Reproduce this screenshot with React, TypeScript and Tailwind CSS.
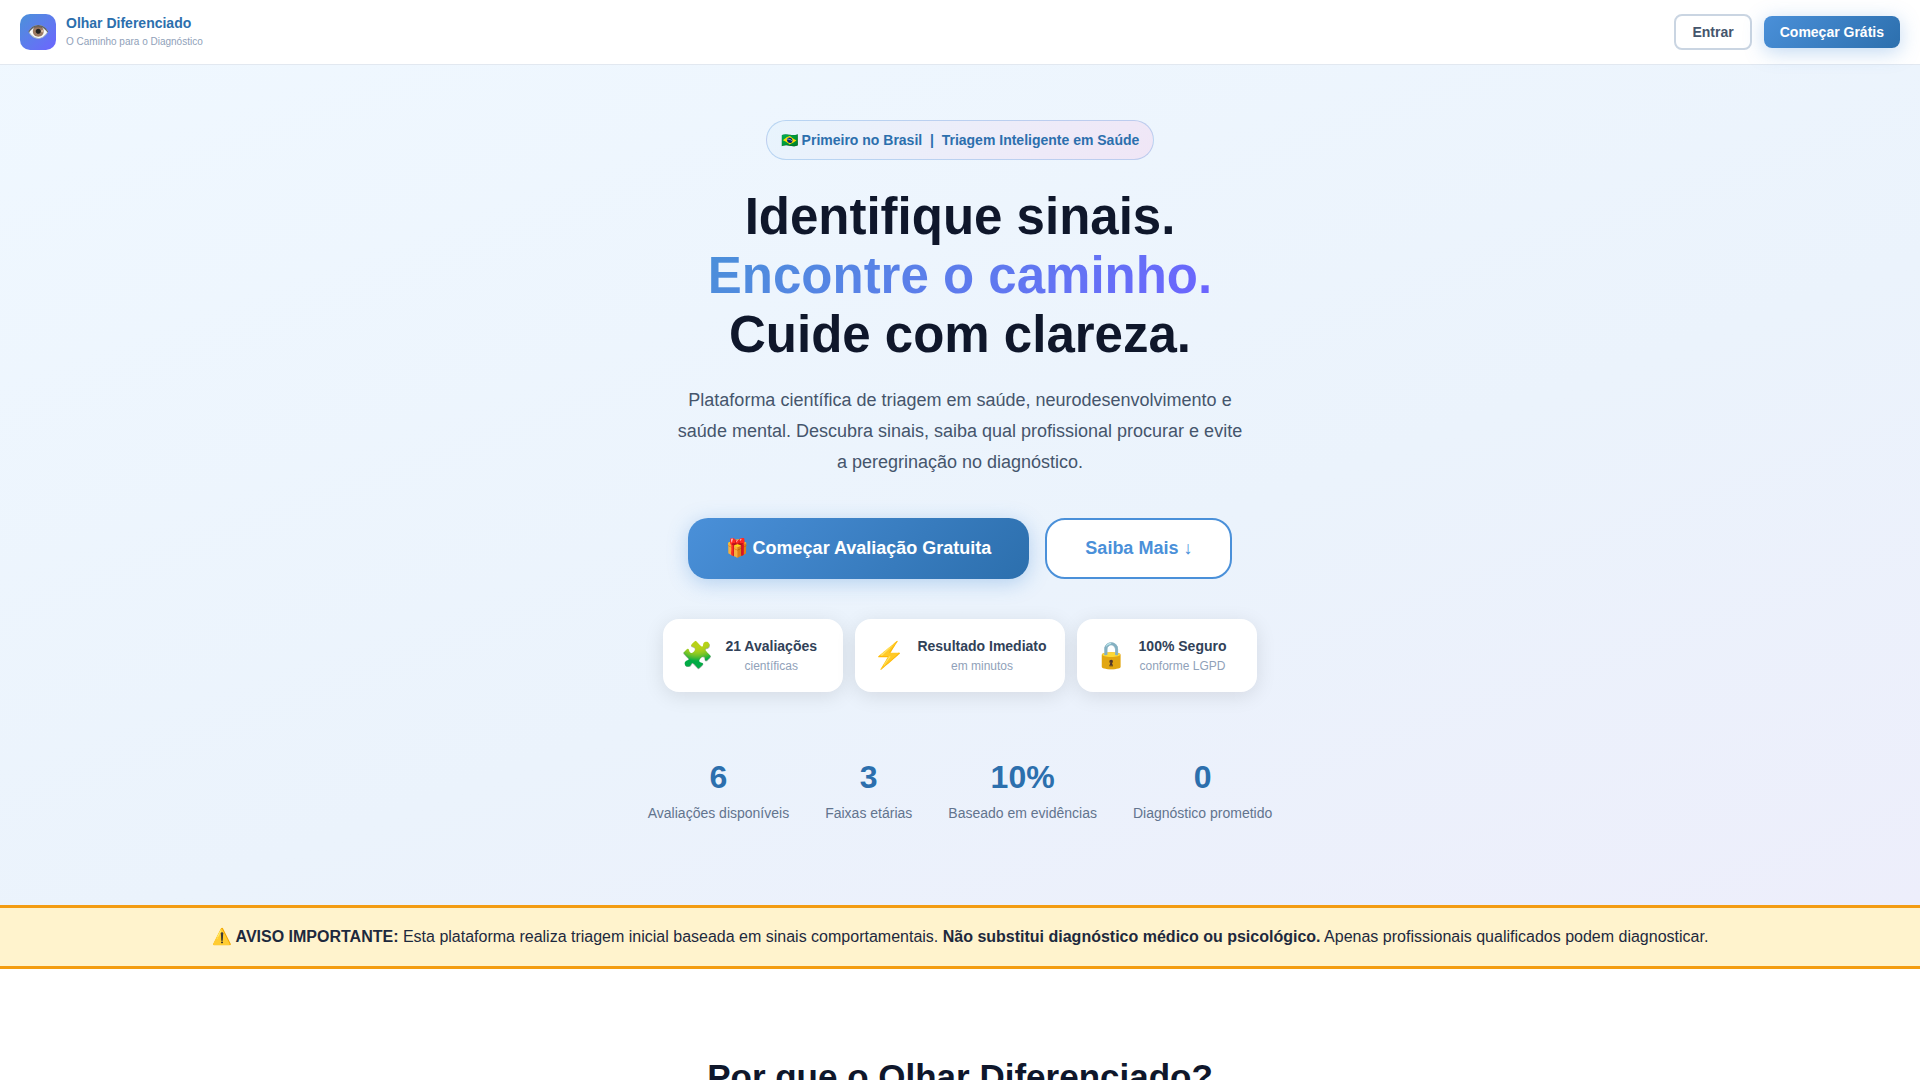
interface Feature {
    icon: string;
    title: string;
    subtitle: string;
}

interface Stat {
    value: string;
    label: string;
}

const features: Feature[] = [
    { icon: '🧩', title: '21 Avaliações', subtitle: 'científicas' },
    { icon: '⚡', title: 'Resultado Imediato', subtitle: 'em minutos' },
    { icon: '🔒', title: '100% Seguro', subtitle: 'conforme LGPD' },
];

const stats: Stat[] = [
    { value: '6', label: 'Avaliações disponíveis' },
    { value: '3', label: 'Faixas etárias' },
    { value: '10%', label: 'Baseado em evidências' },
    { value: '0', label: 'Diagnóstico prometido' },
];

function Header() {
    return (
        <header className="fixed inset-x-0 top-0 z-50 flex items-center justify-between border-b border-slate-200 bg-white px-5 py-[13px]">
            <div className="flex items-center gap-2.5">
                <div className="flex size-9 items-center justify-center rounded-[10px] bg-linear-135 from-[#4a90d9] to-[#6c63ff] text-lg">
                    👁️
                </div>
                <div>
                    <div className="text-sm font-bold leading-5 text-[#2c6fad]">Olhar Diferenciado</div>
                    <div className="text-[10px] leading-[18px] text-slate-400">O Caminho para o Diagnóstico</div>
                </div>
            </div>
            <div className="flex items-center gap-3">
                <button className="rounded-lg border-2 border-slate-300 bg-white px-4 py-1.5 text-sm font-bold text-slate-600">
                    Entrar
                </button>
                <button className="rounded-lg bg-linear-135 from-[#4a90d9] to-[#2c6fad] px-4 py-1.5 text-sm font-bold text-white shadow-[0_4px_20px_rgba(74,144,217,0.35)]">
                    Começar Grátis
                </button>
            </div>
        </header>
    );
}

function FeatureCard({ icon, title, subtitle }: Feature) {
    return (
        <div className="flex min-w-[180px] items-center gap-3 rounded-2xl bg-white px-[18px] py-4 shadow-[0_4px_20px_rgba(0,0,0,0.1)]">
            <span className="text-[26px] leading-[41px]">{icon}</span>
            <div>
                <div className="text-sm font-bold leading-5 text-slate-700">{title}</div>
                <div className="text-xs leading-5 text-slate-400">{subtitle}</div>
            </div>
        </div>
    );
}

function Hero() {
    return (
        <section className="flex flex-col items-center bg-linear-160 from-[#f0f8ff] via-[#ebf3fc] via-60% to-[#edeefb] px-5 pt-[120px] pb-20 text-center">
            <div className="rounded-[20px] border border-[#4a90d9]/30 bg-linear-135 from-[#e8f4fd] to-[#f0e6f6] px-3.5 py-2 text-sm font-bold leading-[22px] text-[#2c6fad]">
                🇧🇷 Primeiro no Brasil &nbsp;|&nbsp; Triagem Inteligente em Saúde
            </div>
            <h1 className="mt-[27px] text-[51px] font-extrabold leading-[59px] text-slate-900">
                Identifique sinais.
                <br />
                <span className="bg-linear-135 from-[#4a90d9] to-[#6c63ff] bg-clip-text text-transparent">
                    Encontre o caminho.
                </span>
                <br />
                Cuide com clareza.
            </h1>
            <p className="mt-[21px] max-w-[570px] text-lg leading-[31px] text-slate-600">
                Plataforma científica de triagem em saúde, neurodesenvolvimento e saúde mental. Descubra sinais, saiba
                qual profissional procurar e evite a peregrinação no diagnóstico.
            </p>
            <div className="mt-10 flex flex-wrap justify-center gap-4">
                <button className="rounded-[20px] bg-linear-135 from-[#4a90d9] to-[#2c6fad] px-[38px] py-4 text-lg font-bold leading-[29px] text-white shadow-[0_4px_20px_rgba(74,144,217,0.35)]">
                    🎁 Começar Avaliação Gratuita
                </button>
                <button className="rounded-[20px] border-2 border-[#4a90d9] bg-white px-[38px] py-3.5 text-lg font-bold leading-[29px] text-[#4a90d9]">
                    Saiba Mais ↓
                </button>
            </div>
            <div className="mt-10 flex flex-wrap justify-center gap-3">
                {features.map((feature) => (
                    <FeatureCard key={feature.title} {...feature} />
                ))}
            </div>
            <div className="mt-16 flex flex-wrap justify-center gap-9">
                {stats.map((stat) => (
                    <div key={stat.label}>
                        <div className="text-[32px] font-extrabold leading-[42px] text-[#2c6fad]">{stat.value}</div>
                        <div className="mt-1 text-sm leading-[23px] text-slate-500">{stat.label}</div>
                    </div>
                ))}
            </div>
        </section>
    );
}

export default function App() {
    return (
        <div className="min-h-screen bg-white font-['Liberation_Sans',Arial,sans-serif] text-slate-800">
            <Header />
            <main>
                <Hero />
                <div className="border-y-3 border-[#f39c12] bg-[#fff3cd] px-5 py-4 text-center text-base leading-[26px]">
                    <strong>⚠️ AVISO IMPORTANTE:</strong> Esta plataforma realiza triagem inicial baseada em sinais
                    comportamentais. <strong>Não substitui diagnóstico médico ou psicológico.</strong> Apenas
                    profissionais qualificados podem diagnosticar.
                </div>
                <section className="px-5 py-20 text-center">
                    <h2 className="text-[35px] font-extrabold leading-[56px] text-slate-900">
                        Por que o Olhar Diferenciado?
                    </h2>
                </section>
            </main>
        </div>
    );
}
